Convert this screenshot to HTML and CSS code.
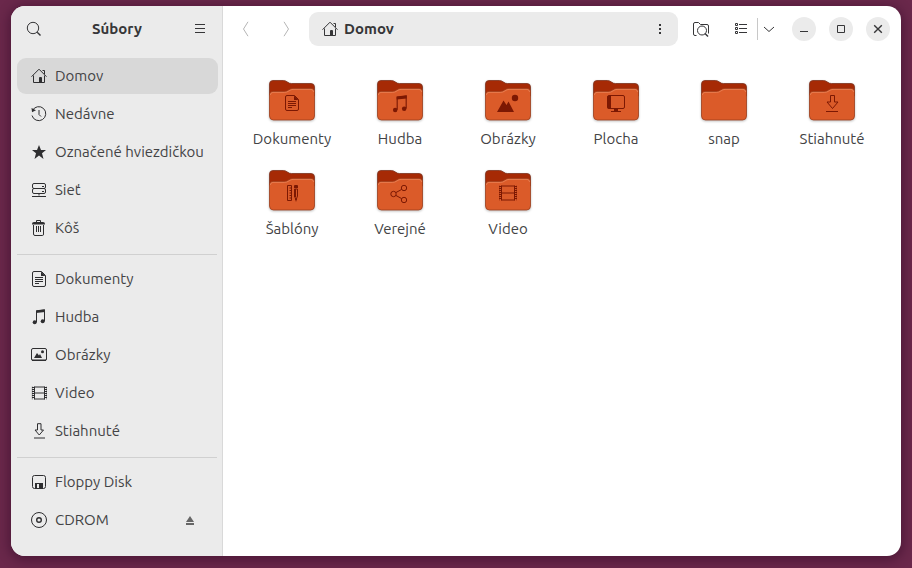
FILE: index.html
```html
<!DOCTYPE html>
<html lang="sk">
<head>
<meta charset="utf-8">
<meta name="viewport" content="width=device-width, initial-scale=1">
<title>Súbory</title>
<link rel="stylesheet" href="styles.css">
</head>
<body>
<svg class="defs" aria-hidden="true">
  <symbol id="home" viewBox="0 0 16 16">
    <path d="M.5 8.700 8 1.200l7.500 7.500M2.500 7.500v7h11v-7M11.500 2.500h2v3.500" class="line"/>
    <path d="M8 14.500V10q0-1 1-1h1q1 0 1 1v4.500z" class="solid"/>
  </symbol>
  <symbol id="recent" viewBox="0 0 16 16">
    <path d="M1.500 4.500A7 7 0 1 1 1 9.500M8 4v4.500l2 2" class="line"/>
    <path d="M.5 2 1 6.300 5 4.300z" class="solid"/>
  </symbol>
  <symbol id="star" viewBox="0 0 16 16">
    <path d="m8 1 2 5h5l-4 3.300L12.500 15 8 11.500 3.500 15 5 9.300 1 6h5z" class="solid"/>
  </symbol>
  <symbol id="network" viewBox="0 0 16 16">
    <rect x="1.500" y="1.500" width="13" height="5" rx="1.500" class="line"/>
    <rect x="1.500" y="6.500" width="13" height="5" rx="1.500" class="line"/>
    <path d="M11 4.500h2M11 9.500h2M1 14.500h14M8 11.500v2" class="line"/>
  </symbol>
  <symbol id="trash" viewBox="0 0 16 16">
    <path d="M5.500 3V.5h4V3M2.500 5v9q0 1.500 1.500 1.500h7.500q1 0 1-1.500V5M5.500 6v6M7.500 6v6M9.500 6v6" class="line"/>
    <path d="M1 4.500V4q0-2 2-2h9q2 0 2 2v.5z" class="solid"/>
  </symbol>
  <symbol id="document" viewBox="0 0 16 16">
    <path d="M3 .5h7.500l4 4V14q0 1.500-1.500 1.500H3q-1.500 0-1.500-1.500V2Q1.500.5 3 .5zM4 6.500h8M4 8.500h8M4 10.500h8M4 12.500h4" class="line"/>
    <path d="M10 .5v4.500h4.500z" class="solid"/>
  </symbol>
  <symbol id="music" viewBox="0 0 16 16">
    <path d="M5.500 13V1.800l8-1V12" class="line"/>
    <path d="M5 1.500 14 .5V3L5 4z" class="solid"/>
    <circle cx="3.700" cy="13.300" r="2" class="solid"/><circle cx="11.700" cy="12.300" r="2" class="solid"/>
  </symbol>
  <symbol id="pictures" viewBox="0 0 16 16">
    <rect x=".5" y="1.500" width="15" height="12" rx="1.500" class="line"/>
    <path d="M3 11 6 6l2 2.500L9 7l2 4zM1 12.500h14v1.500H1z" class="solid"/>
    <circle cx="11.500" cy="4.800" r="1.500" class="solid"/>
  </symbol>
  <symbol id="video" viewBox="0 0 16 16">
    <path d="M3.500 1.500v13M13.500 1.500v13M3.500 2h10M3.500 8h10M3.500 14h10" class="line"/>
    <path d="M2 2v12M15 2v12" class="line dots"/>
    <path d="M1.300 1.500v13M15.700 1.500v13" class="line hair"/>
  </symbol>
  <symbol id="film" viewBox="0 0 18 16">
    <path d="M1 1v14M17 1v14" class="line dots"/>
    <path d="M2.500.5v15M15.500.5v15M2.500 1h13M2.500 8h13M2.500 15h13" class="line"/>
    <path d="M.3.5v15M17.700.5v15" class="line hair"/>
  </symbol>
  <symbol id="download" viewBox="0 0 16 16">
    <path d="M6.500.7h3.500v6.300h2.500L8.250 12 4 7h2.500zM3 15h11" class="line"/>
  </symbol>
  <symbol id="floppy" viewBox="0 0 16 16">
    <rect x="1.500" y="1.500" width="13" height="13" rx="2" class="line"/>
    <path d="M4 9h8v6H4zM6 10v4h2v-4z" class="solid cut"/>
  </symbol>
  <symbol id="disc" viewBox="0 0 16 16">
    <circle cx="8" cy="8" r="7.500" class="line"/><circle cx="8" cy="8" r="2.300" class="line thick"/>
  </symbol>
  <symbol id="folder" viewBox="0 0 48 48">
    <path d="M1.500 19V8q0-3.500 3.500-3.500h10.500q2 0 4 1.600t4 1.400h19.500q3.500 0 3.500 3.500v9z" fill="#a62a05" stroke="#7e3420" stroke-width=".8"/>
    <path d="M1.500 19q0-3.500 3.500-3.500h11.500q2 0 4-1.500t4-1.500h18.500q3.500 0 3.500 3.500V40q0 4-4 4H5.500q-4 0-4-4z" fill="#db5b29" stroke="#9c3d1c" stroke-width=".8"/>
    <path d="M2.400 19q0-2.600 2.600-2.600h11.500q2.500 0 4.500-1.500t4-1.500h18q2.600 0 2.600 2.600" fill="none" stroke="#ee8b60" stroke-width=".7"/>
  </symbol>
</svg>

<div class="window">
  <aside class="sidebar">
    <header class="bar">
      <button class="tool" type="button" aria-label="Hľadať"><svg class="icon" viewBox="0 0 16 16"><circle cx="7" cy="7" r="5.700" class="line"/><path d="m11.200 11.200 3.300 3.300" class="line thick"/></svg></button>
      <h1 class="title">Súbory</h1>
      <button class="tool" type="button" aria-label="Ponuka"><svg class="icon" viewBox="0 0 16 16"><path d="M3 3.500h10M3 7.500h10M3 11.500h10" class="line"/></svg></button>
    </header>
    <nav class="places">
      <ul class="group">
        <li><a class="place current" href="#"><svg class="icon"><use href="#home"/></svg>Domov</a></li>
        <li><a class="place" href="#"><svg class="icon"><use href="#recent"/></svg>Nedávne</a></li>
        <li><a class="place" href="#"><svg class="icon"><use href="#star"/></svg>Označené hviezdičkou</a></li>
        <li><a class="place" href="#"><svg class="icon"><use href="#network"/></svg>Sieť</a></li>
        <li><a class="place" href="#"><svg class="icon"><use href="#trash"/></svg>Kôš</a></li>
      </ul>
      <ul class="group">
        <li><a class="place" href="#"><svg class="icon"><use href="#document"/></svg>Dokumenty</a></li>
        <li><a class="place" href="#"><svg class="icon"><use href="#music"/></svg>Hudba</a></li>
        <li><a class="place" href="#"><svg class="icon"><use href="#pictures"/></svg>Obrázky</a></li>
        <li><a class="place" href="#"><svg class="icon"><use href="#video"/></svg>Video</a></li>
        <li><a class="place" href="#"><svg class="icon"><use href="#download"/></svg>Stiahnuté</a></li>
      </ul>
      <ul class="group">
        <li><a class="place" href="#"><svg class="icon"><use href="#floppy"/></svg>Floppy Disk</a></li>
        <li class="mount"><a class="place" href="#"><svg class="icon"><use href="#disc"/></svg>CDROM</a><button class="eject" type="button" aria-label="Vysunúť"><svg class="icon" viewBox="0 0 16 16"><path d="m8 4 4 6H4zM4 11h8v2H4z" class="solid"/></svg></button></li>
      </ul>
    </nav>
  </aside>

  <main class="content">
    <header class="bar">
      <button class="tool" type="button" aria-label="Späť" disabled><svg class="icon" viewBox="0 0 16 16"><path d="M10 .8 5.500 8l4.500 7.200" class="line"/></svg></button>
      <button class="tool" type="button" aria-label="Dopredu" disabled><svg class="icon" viewBox="0 0 16 16"><path d="M6 .8 10.500 8 6 15.200" class="line"/></svg></button>
      <div class="path">
        <a class="crumb" href="#"><svg class="icon"><use href="#home"/></svg>Domov</a>
        <button class="tool" type="button" aria-label="Ponuka priečinka"><svg class="icon" viewBox="0 0 16 16"><path d="M7 3h2v2H7zM7 7h2v2H7zM7 11h2v2H7z" class="solid"/></svg></button>
      </div>
      <button class="tool" type="button" aria-label="Hľadať v priečinku"><svg class="icon" viewBox="0 0 16 16"><path d="M3.500 14.500H2Q.5 14.500.5 13V3Q.5 1.500 2 1.500h3.500l2 2H14q1.500 0 1.500 1.500v7.500" class="line"/><circle cx="9" cy="9.500" r="4.500" class="line"/><path d="m12 12.500 3 3" class="line thick"/></svg></button>
      <div class="view">
        <button class="view-mode" type="button" aria-label="Zobraziť ako zoznam"><svg class="icon" viewBox="0 0 16 16"><path d="M2.500 2.500h2v2h-2zM2.500 6.500h2v2h-2zM2.500 10.500h2v2h-2zM6 3.500h8M6 7.500h8M6 11.500h8" class="line"/></svg></button>
        <button class="view-menu" type="button" aria-label="Možnosti zobrazenia"><svg class="icon" viewBox="0 0 16 16"><path d="m3 6 5 4.500L13 6" class="line"/></svg></button>
      </div>
      <div class="controls">
        <button class="control" type="button" aria-label="Minimalizovať"><svg class="icon" viewBox="0 0 16 16"><path d="M4 10.500h8" class="line"/></svg></button>
        <button class="control" type="button" aria-label="Maximalizovať"><svg class="icon" viewBox="0 0 16 16"><path d="M4.500 4.500h7v7h-7z" class="line"/></svg></button>
        <button class="control" type="button" aria-label="Zavrieť"><svg class="icon" viewBox="0 0 16 16"><path d="m4.200 4.200 7.600 7.600M11.800 4.200l-7.600 7.600" class="line thick"/></svg></button>
      </div>
    </header>
    <ul class="files">
      <li><a class="file" href="#"><svg class="folder" viewBox="0 0 48 48"><use href="#folder"/><use href="#document" x="16" y="19" width="16" height="16"/></svg>Dokumenty</a></li>
      <li><a class="file" href="#"><svg class="folder" viewBox="0 0 48 48"><use href="#folder"/><use href="#music" x="15" y="19" width="18" height="18"/></svg>Hudba</a></li>
      <li><a class="file" href="#"><svg class="folder" viewBox="0 0 48 48"><use href="#folder"/><path d="m13 36 6.500-11.500 3 4.500 2-3.500L30 36z" class="solid"/><circle cx="31" cy="22" r="3.200" class="solid"/></svg>Obrázky</a></li>
      <li><a class="file" href="#"><svg class="folder" viewBox="0 0 48 48"><use href="#folder"/><rect x="15.500" y="19.500" width="17" height="13" rx="1.500" class="line"/><path d="M15.500 20h3.500v12.500h-3.500zM22 33h4v2h3v1H19v-1h3z" class="solid"/></svg>Plocha</a></li>
      <li><a class="file" href="#"><svg class="folder" viewBox="0 0 48 48"><use href="#folder"/></svg>snap</a></li>
      <li><a class="file" href="#"><svg class="folder" viewBox="0 0 48 48"><use href="#folder"/><path d="M22.500 19.500h4v6.500h3.500l-5.500 6.500L19 26h3.500zM18 35.500h12" class="line"/></svg>Stiahnuté</a></li>
      <li><a class="file" href="#"><svg class="folder" viewBox="0 0 48 48"><use href="#folder"/><path d="M19.500 19.500h4v15h-4zM21.500 22h2M21.500 24.500h2M21.500 27h2M21.500 29.500h2M21.500 32h2M26.500 23v7l1.500 4 1.500-4v-7z" class="line"/><path d="M26 20q0-1 1-1h2q1 0 1 1v2h-4zM26 23h2v8h-2zM27 33h2l-1 3z" class="solid"/></svg>Šablóny</a></li>
      <li><a class="file" href="#"><svg class="folder" viewBox="0 0 48 48"><use href="#folder"/><circle cx="17.500" cy="28" r="2.700" class="line"/><circle cx="28" cy="22" r="2.700" class="line"/><circle cx="28" cy="34" r="2.700" class="line"/><path d="m20 26.500 5.500-3M20 29.500l5.500 3" class="line"/></svg>Verejné</a></li>
      <li><a class="file" href="#"><svg class="folder" viewBox="0 0 48 48"><use href="#folder"/><use href="#film" x="15" y="19" width="18" height="16"/></svg>Video</a></li>
    </ul>
  </main>
</div>
</body>
</html>
```
FILE: styles.css
```css
* { box-sizing: border-box; }

body {
  margin: 0;
  min-height: 100vh;
  padding: 6px 11px 12px;
  display: flex;
  background: #6a284b;
  color: #434345;
  font: 15px/20px "Ubuntu", "Noto Sans", sans-serif;
}

ul { list-style: none; margin: 0; padding: 0; }
a { color: inherit; text-decoration: none; }

button {
  border: 0;
  padding: 0;
  background: none;
  color: inherit;
  font: inherit;
  display: grid;
  place-items: center;
}

.defs { position: absolute; width: 0; height: 0; }
.icon { width: 16px; height: 16px; flex: none; display: block; }
.line { fill: none; stroke: currentColor; stroke-width: 1; }
.thick { stroke-width: 1.4; }
.hair { stroke-width: 0.5; }
.dots { stroke-width: 2; stroke-dasharray: 1 1; }
.solid { fill: currentColor; }
.cut { fill-rule: evenodd; }

.window {
  flex: 1;
  display: flex;
  overflow: hidden;
  border-radius: 14px;
  background: #fff;
  box-shadow: 0 2px 12px 2px rgba(40, 5, 30, 0.45);
}

.sidebar {
  flex: none;
  width: 212px;
  background: #ebebeb;
  border-right: 1px solid #d9d9d9;
}

.content { flex: 1; min-width: 0; }

.bar { display: flex; align-items: center; gap: 6px; padding: 6px; color: #363638; }
.sidebar .bar { padding-right: 5px; }
.tool { width: 34px; height: 34px; flex: none; }
.tool:disabled { color: #b5b5b5; }
.title { flex: 1; margin: 0; text-align: center; font-size: 15px; font-weight: 700; }

.places { padding: 6px 5px 6px 6px; }
.group { display: grid; gap: 2px; }
.group + .group { margin-top: 8px; border-top: 1px solid #d0d0d0; padding-top: 6px; }

.place {
  display: flex;
  flex: 1;
  align-items: center;
  gap: 8px;
  height: 36px;
  padding: 0 14px;
  border-radius: 9px;
  white-space: nowrap;
}

.place .icon { color: #2e2e30; }
.current { background: #d8d8d8; }
.mount { display: flex; align-items: center; padding-right: 19px; }
.eject { color: #666; }

.content .bar { padding-right: 11px; }

.path {
  flex: 1;
  display: flex;
  align-items: center;
  justify-content: space-between;
  padding: 0 1px 0 13px;
  border-radius: 9px;
  background: #ebebeb;
}

.crumb { display: flex; align-items: center; gap: 6px; font-weight: 700; }
.view { display: flex; align-items: center; }
.view-mode { width: 34px; height: 22px; border-right: 1px solid #c8c8c8; }
.view-menu { width: 22px; height: 34px; }
.controls { display: flex; gap: 13px; padding-left: 6px; }
.control { width: 24px; height: 24px; border-radius: 50%; background: #ebebeb; }

.files {
  display: grid;
  grid-template-columns: repeat(auto-fill, 108px);
  row-gap: 12px;
  padding: 24px 15px;
}

.file { display: flex; flex-direction: column; align-items: center; gap: 5px; height: 78px; }

.folder {
  width: 48px;
  height: 48px;
  color: #7c1803;
  filter: drop-shadow(0 1px 1px rgba(0, 0, 0, 0.25));
}
```
